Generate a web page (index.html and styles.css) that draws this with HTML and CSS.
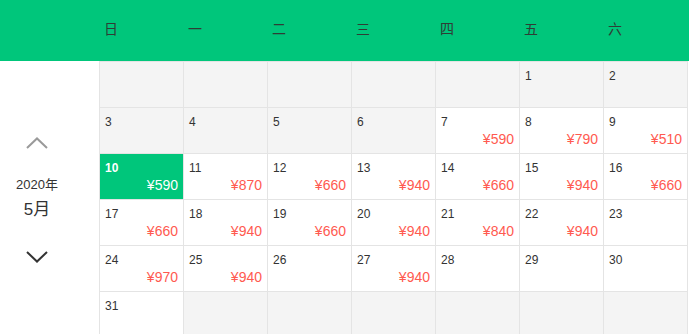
FILE: index.html
```html
<!DOCTYPE html>
<html lang="zh-CN">
<head>
    <meta charset="UTF-8">
    <meta name="viewport" content="width=device-width, initial-scale=1.0">
    <title>低价日历</title>
    <link rel="stylesheet" href="styles.css">
</head>
<body>
    <div class="week-bar">
        <div class="week-spacer"></div>
        <div class="week-day">日</div>
        <div class="week-day">一</div>
        <div class="week-day">二</div>
        <div class="week-day">三</div>
        <div class="week-day">四</div>
        <div class="week-day">五</div>
        <div class="week-day">六</div>
    </div>

    <div class="calendar">
        <div class="month-switch">
            <svg class="arrow arrow-up" width="22" height="12" viewBox="0 0 22 12">
                <polyline points="1,11 11,1.5 21,11" fill="none" stroke="currentColor" stroke-width="2"/>
            </svg>
            <div class="year">2020年</div>
            <div class="month">5月</div>
            <svg class="arrow arrow-down" width="22" height="12" viewBox="0 0 22 12">
                <polyline points="1,1 11,10.5 21,1" fill="none" stroke="currentColor" stroke-width="2"/>
            </svg>
        </div>

        <div class="days">
            <div class="day off"></div>
            <div class="day off"></div>
            <div class="day off"></div>
            <div class="day off"></div>
            <div class="day off"></div>
            <div class="day off"><span class="num">1</span></div>
            <div class="day off"><span class="num">2</span></div>

            <div class="day off"><span class="num">3</span></div>
            <div class="day off"><span class="num">4</span></div>
            <div class="day off"><span class="num">5</span></div>
            <div class="day off"><span class="num">6</span></div>
            <div class="day"><span class="num">7</span><span class="price">¥590</span></div>
            <div class="day"><span class="num">8</span><span class="price">¥790</span></div>
            <div class="day"><span class="num">9</span><span class="price">¥510</span></div>

            <div class="day active"><span class="num">10</span><span class="price">¥590</span></div>
            <div class="day"><span class="num">11</span><span class="price">¥870</span></div>
            <div class="day"><span class="num">12</span><span class="price">¥660</span></div>
            <div class="day"><span class="num">13</span><span class="price">¥940</span></div>
            <div class="day"><span class="num">14</span><span class="price">¥660</span></div>
            <div class="day"><span class="num">15</span><span class="price">¥940</span></div>
            <div class="day"><span class="num">16</span><span class="price">¥660</span></div>

            <div class="day"><span class="num">17</span><span class="price">¥660</span></div>
            <div class="day"><span class="num">18</span><span class="price">¥940</span></div>
            <div class="day"><span class="num">19</span><span class="price">¥660</span></div>
            <div class="day"><span class="num">20</span><span class="price">¥940</span></div>
            <div class="day"><span class="num">21</span><span class="price">¥840</span></div>
            <div class="day"><span class="num">22</span><span class="price">¥940</span></div>
            <div class="day"><span class="num">23</span></div>

            <div class="day"><span class="num">24</span><span class="price">¥970</span></div>
            <div class="day"><span class="num">25</span><span class="price">¥940</span></div>
            <div class="day"><span class="num">26</span></div>
            <div class="day"><span class="num">27</span><span class="price">¥940</span></div>
            <div class="day"><span class="num">28</span></div>
            <div class="day"><span class="num">29</span></div>
            <div class="day"><span class="num">30</span></div>

            <div class="day"><span class="num">31</span></div>
            <div class="day off"></div>
            <div class="day off"></div>
            <div class="day off"></div>
            <div class="day off"></div>
            <div class="day off"></div>
            <div class="day off"></div>
        </div>
    </div>
</body>
</html>
```

FILE: styles.css
```css
body {
    font-family: 'Liberation Sans', Arial, 'Noto Sans CJK SC', sans-serif;
    margin: 0;
    background-color: #fff;
    color: #333;
    overflow: hidden;
}
.week-bar {
    display: flex;
    height: 61px;
    align-items: center;
    background-color: #00c67b;
}
.week-spacer {
    width: 99px;
    flex-shrink: 0;
}
.week-day {
    width: 84px;
    padding-left: 5px;
    box-sizing: border-box;
    font-size: 14px;
    color: #2f3d35;
    padding-bottom: 5px;
}
.calendar {
    display: flex;
}
.month-switch {
    width: 74px;
    margin-right: 25px;
    display: flex;
    flex-direction: column;
    align-items: center;
    justify-content: center;
}
.arrow {
    display: block;
}
.arrow-up {
    color: #9a9a9a;
    margin-bottom: 27px;
}
.arrow-down {
    color: #333;
    margin-top: 30px;
}
.year {
    font-size: 13px;
    line-height: 18px;
}
.month {
    font-size: 17px;
    line-height: 22px;
    margin-top: 5px;
}
.days {
    display: grid;
    grid-template-columns: repeat(7, 83px);
    grid-auto-rows: 45px;
    gap: 1px;
    background-color: #e4e4e4;
    border: 1px solid #e4e4e4;
}
.day {
    background-color: #fff;
    display: flex;
    flex-direction: column;
    justify-content: space-between;
    padding: 6px 5px 6px 5px;
}
.day.off {
    background-color: #f4f4f4;
}
.day.active {
    background-color: #00c67b;
    color: #fff;
}
.num {
    font-size: 12px;
    line-height: 16px;
}
.active .num {
    font-weight: bold;
}
.price {
    align-self: flex-end;
    font-size: 14px;
    line-height: 16px;
    color: #ff5a50;
}
.active .price {
    color: #fff;
}
```
